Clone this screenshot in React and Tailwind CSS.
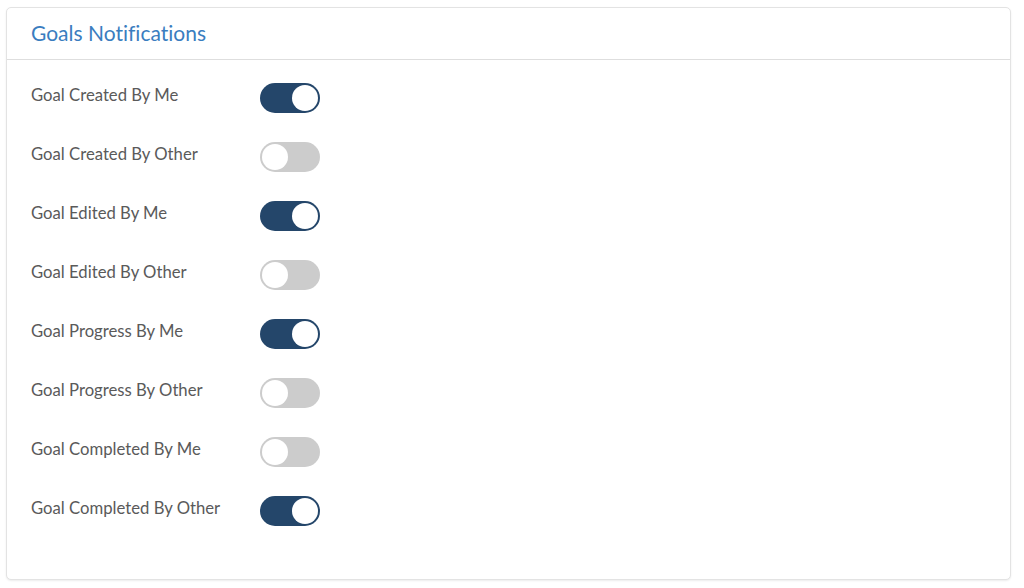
import React, { useState } from "react";

const items = [
  ["Goal Created By Me", true],
  ["Goal Created By Other", false],
  ["Goal Edited By Me", true],
  ["Goal Edited By Other", false],
  ["Goal Progress By Me", true],
  ["Goal Progress By Other", false],
  ["Goal Completed By Me", false],
  ["Goal Completed By Other", true],
];

function Toggle({ on, onClick }) {
  return (
    <button
      onClick={onClick}
      className={`relative w-[60px] h-[30px] rounded-full shrink-0 ${on ? "bg-[#24466a]" : "bg-[#cccccc]"}`}
    >
      <span
        className={`absolute top-[2px] w-[26px] h-[26px] rounded-full bg-white ${on ? "left-[32px]" : "left-[2px]"}`}
      />
    </button>
  );
}

export default function App() {
  const [state, setState] = useState(items.map((i) => i[1]));
  return (
    <div className="bg-white w-[1024px] h-[588px] pt-[7px] pl-[6px] [font-variant-ligatures:none]" style={{ fontFamily: "Lato, 'Noto Sans', sans-serif" }}>
      <div className="w-[1005px] h-[573px] border border-[#e3e3e3] rounded-[5px] shadow-[0_1px_2px_rgba(0,0,0,0.08)] bg-white">
        <div className="h-[52px] border-b border-[#dedede] pl-[24px] flex items-center">
          <h2 className="text-[21px] text-[#3a7dbf] leading-none pb-[2px]">Goals Notifications</h2>
        </div>
        <div className="pl-[24px] pt-[23px] flex flex-col gap-[29px]">
          {items.map(([label], i) => (
            <div key={label} className="flex items-start">
              <div className="w-[229px] text-[16.7px] leading-[25px] text-[#5a5a5a]">{label}</div>
              <Toggle
                on={state[i]}
                onClick={() => setState((s) => s.map((v, j) => (j === i ? !v : v)))}
              />
            </div>
          ))}
        </div>
      </div>
    </div>
  );
}
